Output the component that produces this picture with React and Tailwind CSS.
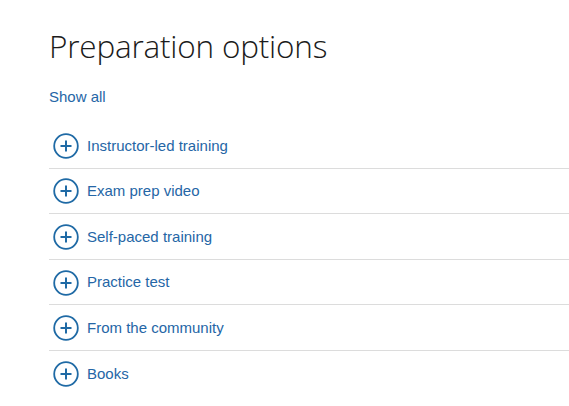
import React from "react";

const items = [
  "Instructor-led training",
  "Exam prep video",
  "Self-paced training",
  "Practice test",
  "From the community",
  "Books",
];

function PlusCircle() {
  return (
    <svg width="26" height="26" viewBox="0 0 26 26" className="shrink-0">
      <circle cx="13" cy="13" r="11.8" fill="none" stroke="#1f6aa5" strokeWidth="1.8" />
      <path d="M13 7.5v11M7.5 13h11" stroke="#1f6aa5" strokeWidth="2" />
    </svg>
  );
}

export default function App() {
  return (
    <div
      className="w-[569px] h-[406px] bg-white overflow-hidden pl-[49px]"
      style={{ fontFamily: '"Liberation Sans", Arial, sans-serif' }}
    >
      <h1
        className="text-[31.5px] leading-[40px] text-[#1b1b1b] pt-[26px] tracking-[-0.2px]"
        style={{ fontFamily: '"Open Sans", "Noto Sans", sans-serif', fontWeight: 300 }}
      >
        Preparation options
      </h1>
      <div className="mt-[22px] text-[15px] leading-[18px] text-[#2566a6]">Show all</div>
      <ul className="mt-[17px]">
        {items.map((t, i) => (
          <li
            key={t}
            className={
              "h-[45.6px] flex items-center gap-[8px] pl-[4px] pt-[1px] text-[15px] text-[#2566a6] " +
              (i < items.length - 1 ? "border-b border-[#dcdcdc]" : "")
            }
          >
            <PlusCircle />
            <span>{t}</span>
          </li>
        ))}
      </ul>
    </div>
  );
}
